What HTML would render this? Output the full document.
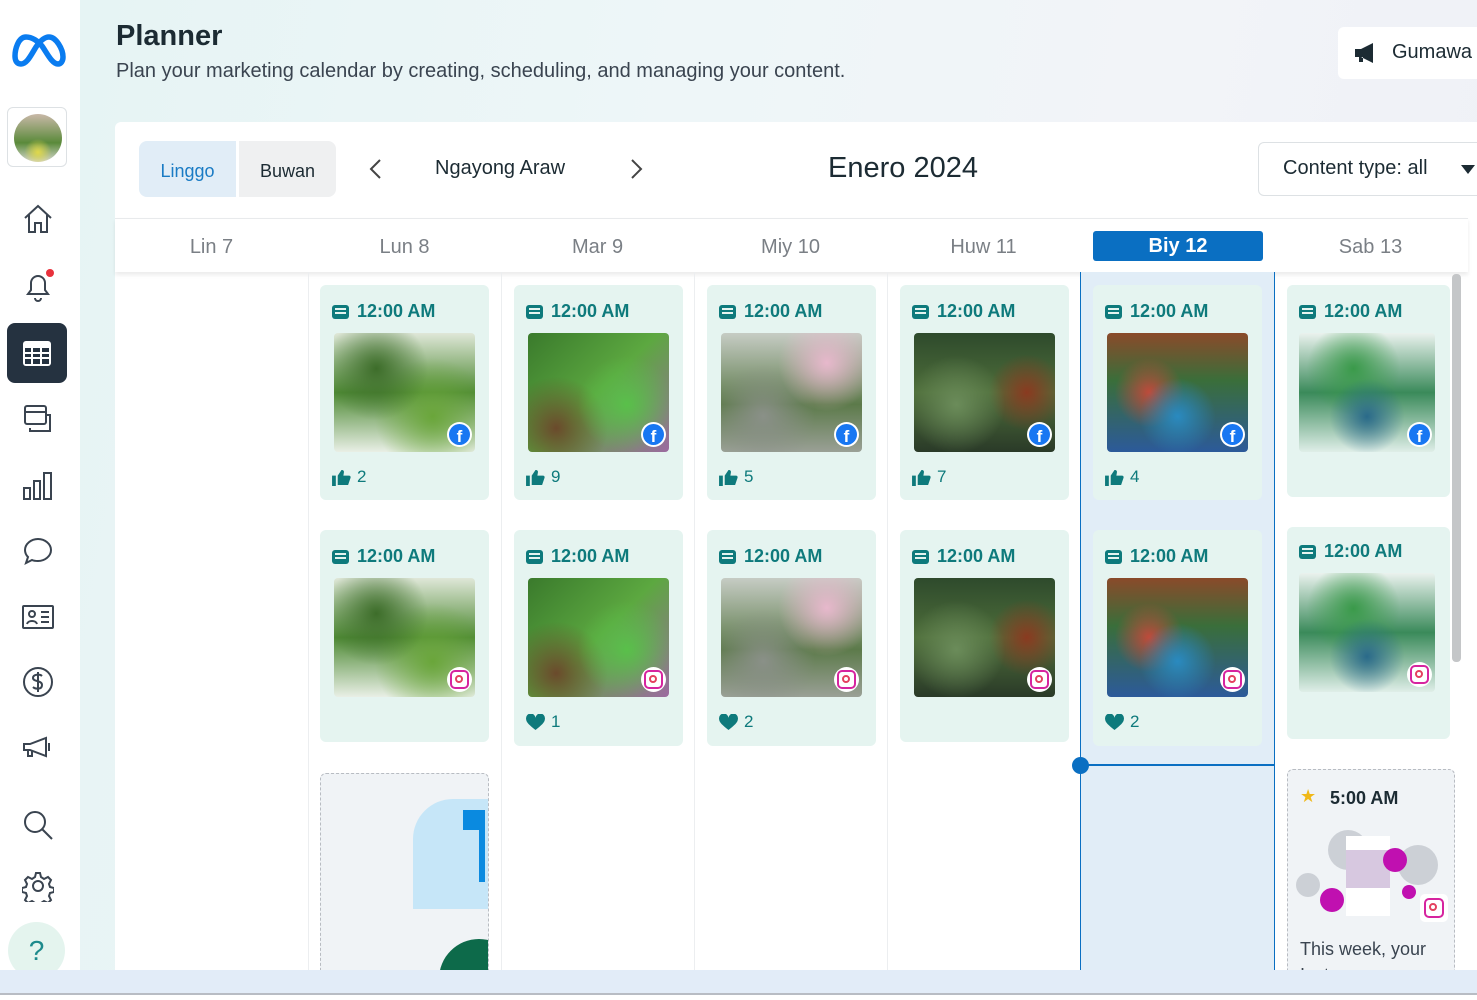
<!DOCTYPE html>
<html><head><meta charset="utf-8">
<style>
*{box-sizing:border-box;margin:0;padding:0}
body{width:1477px;height:1000px;overflow:hidden;font-family:"Liberation Sans",sans-serif;background:#fff;position:relative}
.side{position:absolute;left:0;top:0;width:80px;height:993px;background:#fff}
.main{position:absolute;left:80px;top:0;width:1397px;height:993px;background:linear-gradient(100deg,#e6f4f4 0%,#eef6f8 40%,#f2f4f8 70%,#eef0f6 100%)}
.bot{position:absolute;left:0;top:970px;width:1477px;height:23px;background:#e2ecf8}
.line{position:absolute;left:0;top:993px;width:1477px;height:2px;background:#b8bcc4}
.panel{position:absolute;left:115px;top:122px;width:1362px;height:848px;background:#fff;border-radius:6px 0 0 0}
.ico{position:absolute;left:22px}
.abs{position:absolute}
.col{position:absolute;top:272px;height:698px;border-left:1px solid #eceef0}
.day{position:absolute;top:236px;font-size:20px;color:#7a7f85;text-align:center;width:193px}
.c{position:absolute;background:#e5f4f0;border-radius:6px;width:169px}
.t{position:absolute;left:12px;top:16px;font-weight:bold;font-size:18px;color:#0e7a7c;display:flex;align-items:center;gap:8px}
.t i{display:inline-block;width:17px;height:14px;background:#0e7a7c;border-radius:3px;position:relative}
.t i:before{content:"";position:absolute;left:3px;top:3px;width:11px;height:2px;background:#e5f4f0;box-shadow:0 4px 0 #e5f4f0}
.im{position:absolute;left:14px;top:48px;width:141px;height:119px;border-radius:4px;overflow:hidden}
.b{position:absolute;right:3px;bottom:5px;width:25px;height:25px;border-radius:50%;background:#fff;display:flex;align-items:center;justify-content:center}
.fb{width:21px;height:21px;border-radius:50%;background:#1877f2;color:#fff;font-weight:bold;font-size:17px;line-height:25px;text-align:center;overflow:hidden}
.ig{width:19px;height:19px;border-radius:5px;border:2.5px solid #d6249f;position:relative;background:#fff}
.ig:before{content:"";position:absolute;left:3px;top:3px;width:8px;height:8px;border:2px solid #e4405f;border-radius:50%;box-sizing:border-box}
.s{position:absolute;left:12px;top:182px;font-size:17px;color:#0e7a7c;display:flex;align-items:center;gap:6px}
.g1{background:radial-gradient(circle at 30% 30%,#3d6d2a,transparent 40%),radial-gradient(circle at 70% 70%,#6aa63a,transparent 45%),linear-gradient(#dfe7d8,#4e8a34 50%,#e9efe6)}
.g2{background:radial-gradient(circle at 70% 60%,#59c04a,transparent 40%),radial-gradient(circle at 20% 80%,#6b4a2c,transparent 35%),linear-gradient(135deg,#3a7a2c,#5ca840 50%,#9c6aa0)}
.g3{background:radial-gradient(circle at 75% 25%,#e7b8cc,transparent 35%),radial-gradient(circle at 30% 70%,#8a9088,transparent 40%),linear-gradient(#c6ccc4,#5c7a4a 60%,#9aa096)}
.g4{background:radial-gradient(circle at 30% 60%,#6b8c5a,transparent 40%),radial-gradient(circle at 80% 50%,#8a3a20,transparent 30%),linear-gradient(#2e4a2c,#4e6e3a 50%,#2a3a28)}
.g5{background:radial-gradient(circle at 50% 70%,#2a8ac0,transparent 35%),radial-gradient(circle at 30% 50%,#c04a3a,transparent 30%),linear-gradient(#8a4a2a,#3a6e3a 40%,#2c5a9a)}
.g6{background:radial-gradient(circle at 50% 70%,#2a6a8a,transparent 35%),radial-gradient(circle at 40% 30%,#3a9a4a,transparent 40%),linear-gradient(#eaf2ee,#3a8a5a 50%,#dfeee8)}
</style></head><body>
<svg width="0" height="0" style="position:absolute"><defs>
<symbol id="th" viewBox="0 0 20 18"><rect x="0" y="7" width="4" height="11" fill="#0e7a7c"/><path d="M6 7l4-6c2 0 3 1 2.5 3L12 7h6c1.5 0 2 1.5 1.5 2.5L17 17H6z" fill="#0e7a7c"/></symbol>
<symbol id="ht" viewBox="0 0 20 18"><path d="M10 17C4 12 0 9 0 5a5 5 0 0110-1 5 5 0 0110 1c0 4-4 7-10 12z" fill="#0e7a7c"/></symbol>
</defs></svg>
<div class="side">
<svg class="abs" style="left:12px;top:32px" width="54" height="38" viewBox="0 0 54 38"><path d="M14 5C6 5 3 18 3 24c0 5 2 8 6 8 6 0 10-9 15-17 4-6 8-10 13-10 7 0 14 12 14 20 0 4-2 7-5 7-6 0-11-11-16-18C26 9 20 5 14 5z" fill="none" stroke="#0a7cf0" stroke-width="5.5" stroke-linejoin="round"/></svg>
<div class="abs" style="left:7px;top:107px;width:60px;height:60px;border:1px solid #dde1e4;border-radius:6px;background:#fff"><div style="margin:6px;width:48px;height:48px;border-radius:50%;background:radial-gradient(circle at 50% 80%,#e0d84a,transparent 30%),linear-gradient(#c9b8a8,#5a8a3a 60%,#d8d8d0)"></div></div>
<svg class="ico" style="top:203px" width="32" height="32" viewBox="0 0 32 32" fill="none" stroke="#3a4450" stroke-width="2"><path d="M3 15L16 3l13 12M7 12v17h6v-9h6v9h6V12"/></svg>
<svg class="ico" style="top:268px" width="32" height="36" viewBox="0 0 32 36" fill="none" stroke="#3a4450" stroke-width="2"><path d="M6 26h20l-3-4v-7a7 7 0 00-14 0v7zM13 30a3 3 0 006 0"/><circle cx="28" cy="5" r="4" fill="#e8313c" stroke="none"/></svg>
<div class="abs" style="left:7px;top:323px;width:60px;height:60px;background:#253240;border-radius:8px"><svg style="margin:14px" width="32" height="32" viewBox="0 0 32 32"><rect x="2" y="4" width="28" height="25" rx="3" fill="#fff"/><rect x="4" y="11" width="24" height="16" fill="#253240"/><path d="M4 16h24M4 21h24M11 11v16M20 11v16" stroke="#fff" stroke-width="2"/></svg></div>
<svg class="ico" style="top:403px" width="32" height="32" viewBox="0 0 32 32" fill="none" stroke="#3a4450" stroke-width="2"><rect x="3" y="3" width="21" height="18" rx="2"/><path d="M3 9h21M8 25v3h20V12h-4"/></svg>
<svg class="ico" style="top:470px" width="32" height="32" viewBox="0 0 32 32" fill="none" stroke="#3a4450" stroke-width="2"><rect x="2" y="18" width="6" height="11"/><rect x="12" y="11" width="6" height="18"/><rect x="22" y="3" width="7" height="26"/></svg>
<svg class="ico" style="top:535px" width="32" height="32" viewBox="0 0 32 32" fill="none" stroke="#3a4450" stroke-width="2"><path d="M16 4c7 0 13 5 13 11s-6 11-13 11c-2 0-4 0-6-1l-6 3 2-6c-2-2-3-5-3-7 0-6 6-11 13-11z"/></svg>
<svg class="ico" style="top:601px" width="32" height="32" viewBox="0 0 32 32" fill="none" stroke="#3a4450" stroke-width="2"><rect x="1" y="5" width="30" height="22" rx="1"/><circle cx="10" cy="13" r="3"/><path d="M5 23c1-4 9-4 10 0M19 11h8M19 16h8M19 21h8"/></svg>
<svg class="ico" style="top:666px" width="32" height="32" viewBox="0 0 32 32" fill="none" stroke="#3a4450" stroke-width="2"><circle cx="16" cy="16" r="14"/><path d="M20 10c-2-2-9-2-9 2s9 2 9 7-7 4-9 2M16 6v20"/></svg>
<svg class="ico" style="top:732px" width="32" height="32" viewBox="0 0 32 32" fill="none" stroke="#3a4450" stroke-width="2"><path d="M2 12h6l16-6v18L8 18H2zM6 18v6h4v-5M27 11v8"/></svg>
<svg class="ico" style="top:809px" width="32" height="34" viewBox="0 0 32 34" fill="none" stroke="#3a4450" stroke-width="2"><circle cx="13" cy="13" r="10"/><path d="M20 20l10 10"/></svg>
<svg class="ico" style="top:870px" width="32" height="32" viewBox="0 0 32 32" fill="none" stroke="#3a4450" stroke-width="2"><circle cx="16" cy="16" r="5"/><path d="M14 3h4l1 4 3 2 4-2 3 3-2 4 1 3 4 1v4l-4 1-1 3 2 4-3 3-4-2-3 2-1 4h-4l-1-4-3-2-4 2-3-3 2-4-1-3-4-1v-4l4-1 1-3-2-4 3-3 4 2 3-2z"/></svg>
<div class="abs" style="left:8px;top:922px;width:57px;height:57px;border-radius:50%;background:#e4f4ee;color:#1d8a8c;font-size:28px;text-align:center;line-height:57px">?</div>
</div>
<div class="main"></div>
<div class="bot"></div><div class="line"></div>
<div class="abs" style="left:116px;top:20px;font-size:29px;font-weight:bold;color:#1c2b33">Planner</div>
<div class="abs" style="left:116px;top:60px;font-size:20px;color:#3a4450">Plan your marketing calendar by creating, scheduling, and managing your content.</div>
<div class="abs" style="left:1338px;top:27px;width:160px;height:52px;background:#fff;border-radius:6px;font-size:20px;color:#1c2b33;padding:14px 0 0 54px">Gumawa<svg class="abs" style="left:16px;top:15px" width="26" height="22" viewBox="0 0 26 22"><path d="M1 7h6l12-6v20L7 15H1zM5 15v5h4v-5" fill="#1c2b33"/></svg></div>
<div class="panel"></div>
<div class="abs" style="left:139px;top:141px;width:97px;height:56px;background:#e1edf7;border-radius:8px 0 0 8px;color:#1a7bc4;font-size:18px;text-align:center;line-height:60px">Linggo</div>
<div class="abs" style="left:239px;top:141px;width:97px;height:56px;background:#eff0f1;border-radius:0 8px 8px 0;color:#1c2b33;font-size:18px;text-align:center;line-height:60px">Buwan</div>
<svg class="abs" style="left:368px;top:158px" width="16" height="22" viewBox="0 0 16 22" fill="none" stroke="#444" stroke-width="2"><path d="M12 2L3 11l9 9"/></svg>
<div class="abs" style="left:435px;top:157px;font-size:20px;color:#1c2b33">Ngayong Araw</div>
<svg class="abs" style="left:628px;top:158px" width="16" height="22" viewBox="0 0 16 22" fill="none" stroke="#444" stroke-width="2"><path d="M4 2l9 9-9 9"/></svg>
<div class="abs" style="left:828px;top:152px;font-size:29px;color:#1c2b33">Enero 2024</div>
<div class="abs" style="left:1258px;top:142px;width:230px;height:54px;border:1px solid #dde1e4;border-radius:6px;font-size:20px;color:#1c2b33;padding:14px 0 0 24px">Content type: all<svg class="abs" style="left:202px;top:22px" width="14" height="9"><path d="M0 0h14L7 9z" fill="#1c2b33"/></svg></div>
<div class="abs" style="left:115px;top:218px;width:1353px;height:54px;background:#fff;border-top:1px solid #e8eaec;box-shadow:0 3px 4px rgba(0,0,0,.08)"></div>
<div class="day" style="left:115px">Lin 7</div>
<div class="day" style="left:308px">Lun 8</div>
<div class="day" style="left:501px">Mar 9</div>
<div class="day" style="left:694px">Miy 10</div>
<div class="day" style="left:887px">Huw 11</div>
<div class="abs" style="left:1093px;top:231px;width:170px;height:30px;background:#0a6fc2;border-radius:3px;color:#fff;font-weight:bold;font-size:20px;text-align:center;line-height:31px">Biy 12</div>
<div class="day" style="left:1274px">Sab 13</div>
<div class="col" style="left:308px"></div><div class="col" style="left:501px"></div><div class="col" style="left:694px"></div><div class="col" style="left:887px"></div>
<div class="abs" style="left:1080px;top:272px;width:195px;height:698px;background:#e1edf7;border-left:1.5px solid #0a6fc2;border-right:1.5px solid #0a6fc2"></div>
<div class="abs" style="left:1080px;top:764px;width:195px;height:2px;background:#0a6fc2"></div>
<div class="abs" style="left:1072px;top:757px;width:17px;height:17px;border-radius:50%;background:#0a6fc2"></div>
<div class="abs" style="left:1452px;top:274px;width:9px;height:388px;background:#c4c6c8;border-radius:4px"></div>

<!-- row 1 -->
<div class="c" style="left:320px;top:285px;height:215px"><div class="t"><i></i>12:00 AM</div><div class="im g1"><div class="b"><div class="fb">f</div></div></div><div class="s"><svg width="19" height="17"><use href="#th"/></svg><span>2</span></div></div>
<div class="c" style="left:514px;top:285px;height:215px"><div class="t"><i></i>12:00 AM</div><div class="im g2"><div class="b"><div class="fb">f</div></div></div><div class="s"><svg width="19" height="17"><use href="#th"/></svg><span>9</span></div></div>
<div class="c" style="left:707px;top:285px;height:215px"><div class="t"><i></i>12:00 AM</div><div class="im g3"><div class="b"><div class="fb">f</div></div></div><div class="s"><svg width="19" height="17"><use href="#th"/></svg><span>5</span></div></div>
<div class="c" style="left:900px;top:285px;height:215px"><div class="t"><i></i>12:00 AM</div><div class="im g4"><div class="b"><div class="fb">f</div></div></div><div class="s"><svg width="19" height="17"><use href="#th"/></svg><span>7</span></div></div>
<div class="c" style="left:1093px;top:285px;height:215px"><div class="t"><i></i>12:00 AM</div><div class="im g5"><div class="b"><div class="fb">f</div></div></div><div class="s"><svg width="19" height="17"><use href="#th"/></svg><span>4</span></div></div>
<div class="c" style="left:1287px;top:285px;height:212px;width:163px"><div class="t"><i></i>12:00 AM</div><div class="im g6" style="left:12px;width:136px"><div class="b"><div class="fb">f</div></div></div></div>
<!-- row 2 -->
<div class="c" style="left:320px;top:530px;height:212px"><div class="t"><i></i>12:00 AM</div><div class="im g1"><div class="b"><div class="ig"></div></div></div></div>
<div class="c" style="left:514px;top:530px;height:216px"><div class="t"><i></i>12:00 AM</div><div class="im g2"><div class="b"><div class="ig"></div></div></div><div class="s"><svg width="19" height="17"><use href="#ht"/></svg><span>1</span></div></div>
<div class="c" style="left:707px;top:530px;height:216px"><div class="t"><i></i>12:00 AM</div><div class="im g3"><div class="b"><div class="ig"></div></div></div><div class="s"><svg width="19" height="17"><use href="#ht"/></svg><span>2</span></div></div>
<div class="c" style="left:900px;top:530px;height:212px"><div class="t"><i></i>12:00 AM</div><div class="im g4"><div class="b"><div class="ig"></div></div></div></div>
<div class="c" style="left:1093px;top:530px;height:216px"><div class="t"><i></i>12:00 AM</div><div class="im g5"><div class="b"><div class="ig"></div></div></div><div class="s"><svg width="19" height="17"><use href="#ht"/></svg><span>2</span></div></div>
<div class="c" style="left:1287px;top:527px;height:212px;width:163px"><div class="t" style="top:14px"><i></i>12:00 AM</div><div class="im g6" style="left:12px;width:136px;top:46px"><div class="b"><div class="ig"></div></div></div></div>
<!-- row 3 -->
<div class="abs" style="left:320px;top:773px;width:169px;height:200px;background:#f0f3f6;border:1px dashed #b8bcc2;border-radius:6px 6px 0 0;overflow:hidden">
<div class="abs" style="left:92px;top:25px;width:80px;height:110px;background:#c6e6f8;border-radius:40px 0 0 0"></div>
<div class="abs" style="left:142px;top:36px;width:20px;height:20px;background:#0a8ae0"></div>
<div class="abs" style="left:158px;top:36px;width:6px;height:72px;background:#0a8ae0"></div>
<div class="abs" style="left:118px;top:165px;width:80px;height:80px;border-radius:50%;background:#0d6a4a"></div></div>
<div class="abs" style="left:1287px;top:769px;width:168px;height:210px;background:#f0f3f6;border:1px dashed #b8bcc2;border-radius:6px 6px 0 0;overflow:hidden">
<div class="abs" style="left:12px;top:16px;font-size:18px;color:#f0b818">★</div>
<div class="abs" style="left:42px;top:18px;font-weight:bold;font-size:18px;color:#1c2b33">5:00 AM</div>
<div class="abs" style="left:40px;top:60px;width:40px;height:40px;border-radius:50%;background:#ccd0d6"></div>
<div class="abs" style="left:110px;top:75px;width:40px;height:40px;border-radius:50%;background:#ccd0d6"></div>
<div class="abs" style="left:8px;top:103px;width:24px;height:24px;border-radius:50%;background:#ccd0d6"></div>
<div class="abs" style="left:58px;top:66px;width:44px;height:80px;background:#fff"><div style="margin:14px 0 0;height:38px;background:#d7c8e0"></div></div>
<div class="abs" style="left:95px;top:78px;width:24px;height:24px;border-radius:50%;background:#c010b0"></div>
<div class="abs" style="left:32px;top:118px;width:24px;height:24px;border-radius:50%;background:#c010b0"></div>
<div class="abs" style="left:114px;top:115px;width:14px;height:14px;border-radius:50%;background:#c010b0"></div>
<div class="abs" style="left:132px;top:124px;width:28px;height:28px;background:#fff;border-radius:5px;padding:4px"><div class="ig" style="width:20px;height:20px"></div></div>
<div class="abs" style="left:12px;top:166px;font-size:18px;color:#3a4450;line-height:26px">This week, your<br>Instagram</div></div>
<div class="bot" style="z-index:2"></div><div class="line" style="z-index:2"></div>
</body></html>
